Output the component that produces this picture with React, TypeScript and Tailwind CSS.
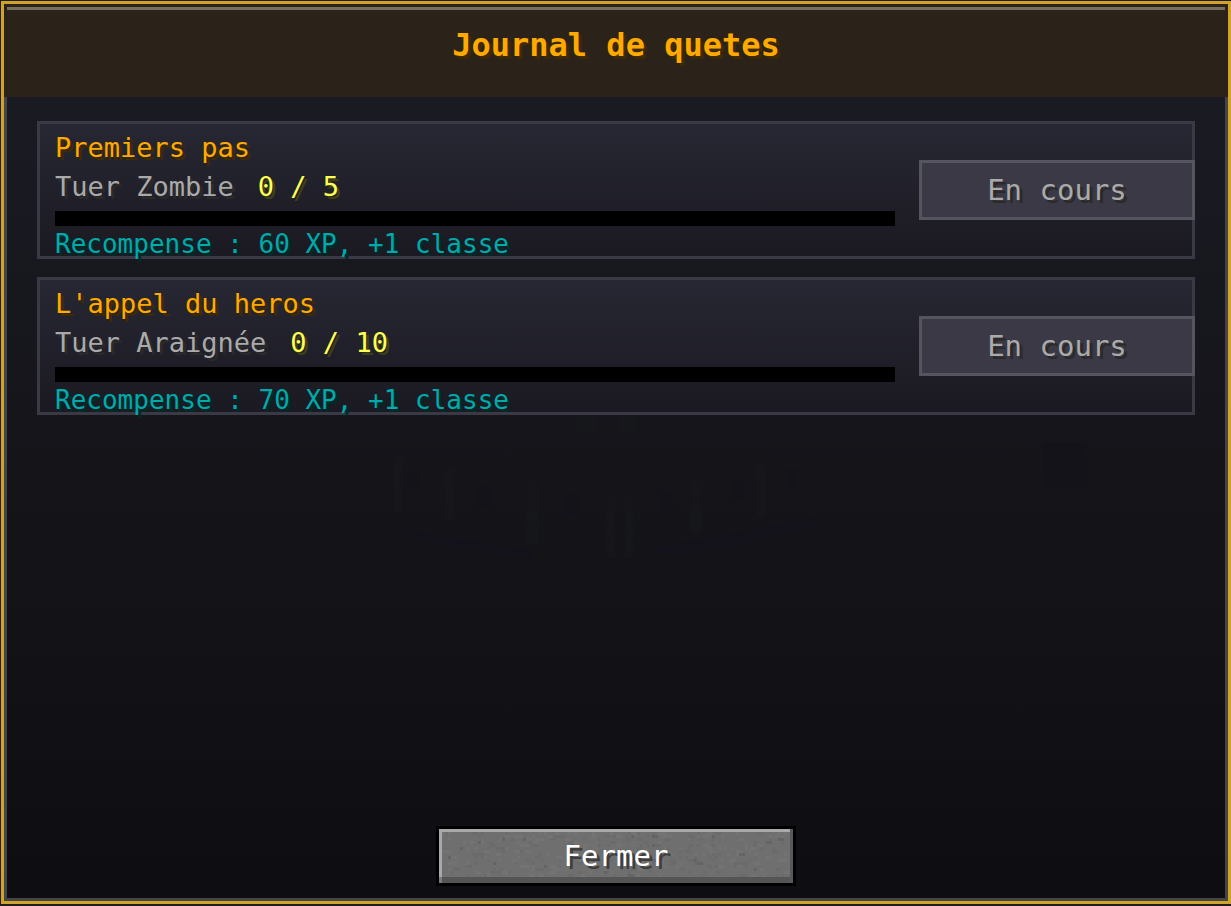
type Quest = {
  title: string;
  task: string;
  current: number;
  goal: number;
  reward: string;
};

const quests: Quest[] = [
  { title: "Premiers pas", task: "Tuer Zombie", current: 0, goal: 5, reward: "60 XP, +1 classe" },
  { title: "L'appel du heros", task: "Tuer Araignée", current: 0, goal: 10, reward: "70 XP, +1 classe" },
];

// Speckles of the stone button, on a 3px grid
const specks = Array.from({ length: 420 }, (_, i) => {
  const seed = Math.abs(Math.sin(i * 12.9898 + 4.1) * 43758.5453);
  const seed2 = Math.abs(Math.sin(i * 78.233 + 1.7) * 24634.6345);
  return {
    x: Math.floor((seed % 1) * 116) * 3,
    y: Math.floor((seed2 % 1) * 17) * 3,
    w: i % 3 === 0 ? 6 : 3,
    fill: i % 17 === 0 ? "#646464" : i % 2 === 0 ? "#6b6b6b" : "#737373",
  };
});

// Dimmed castle wall showing through the panel
const Backdrop = () => (
  <svg
    className="pointer-events-none absolute inset-0 h-full w-full"
    viewBox="0 0 1218 801"
    preserveAspectRatio="none"
    aria-hidden="true"
  >
    <g fill="#191b1d" opacity="0.4">
      <path d="M387 360h8v54h-8zM438 372h8v50h-8zM520 385h12v62h-12zM600 395h8v66h-8zM618 395h8v66h-8zM684 385h10v52h-10zM750 370h8v50h-8z" />
      <path d="M570 320h20v16h-20zM612 320h16v14h-16z" />
    </g>
    <g fill="#14111e" opacity="0.35">
      <path d="M400 375h12v18h-12zM470 388h14v22h-14zM556 397h16v22h-16zM652 394h14v20h-14zM726 382h12v22h-12zM780 372h10v18h-10z" />
      <path d="M385 430l140 24v8l-120-20zM640 452l170-32v10l-140 30z" />
      <path d="M1035 345h45v45h-45z" />
    </g>
  </svg>
);

const QuestCard = ({ quest }: { quest: Quest }) => {
  const { title, task, current, goal, reward } = quest;

  return (
    <li className="flex items-center gap-6 border-3 border-[#3a3946] bg-linear-to-b from-[#272733] to-[#1b1a22] pl-[15px]">
      <div className="-mb-[3px] min-w-0 flex-1 pt-1">
        <h2 className="text-[27px] leading-[39px] text-[#ffaa00] [text-shadow:3px_3px_0_#402a00]">
          {title}
        </h2>
        <p className="flex items-baseline gap-6 leading-[39px]">
          <span className="text-[27px] text-[#aaaaaa] [text-shadow:3px_3px_0_#2a2a2a]">{task}</span>
          <span className="text-[27px] text-[#ffff55] [text-shadow:3px_3px_0_#3f3f15]">
            {current} / {goal}
          </span>
        </p>
        <div
          role="progressbar"
          aria-label={title}
          aria-valuenow={current}
          aria-valuemin={0}
          aria-valuemax={goal}
          className="mt-[5px] h-[15px] bg-black"
        >
          <div className="h-full bg-[#ffaa00]" style={{ width: `${(current / goal) * 100}%` }} />
        </div>
        <p className="mt-[3px] text-[26px] leading-[30px] text-[#00aaaa] [text-shadow:3px_3px_0_#002a2a]">
          Recompense : {reward}
        </p>
      </div>
      <button
        type="button"
        className="-mr-[3px] h-[60px] w-[276px] shrink-0 border-3 border-[#55555f] bg-[#3a3945] text-[29px] leading-[54px] text-[#aaaaaa] [text-shadow:3px_3px_0_#2a2a2a]"
      >
        En cours
      </button>
    </li>
  );
};

const CloseButton = () => (
  <button type="button" className="grid h-[60px] w-[360px] border-3 border-black bg-[#6f6f6f]">
    <svg
      className="col-start-1 row-start-1 h-full w-full"
      viewBox="0 0 354 54"
      preserveAspectRatio="none"
      shapeRendering="crispEdges"
      aria-hidden="true"
    >
      {specks.map((s, i) => (
        <rect key={i} x={s.x} y={s.y} width={s.w} height="3" fill={s.fill} />
      ))}
      <path d="M0 48h354v6H0z" fill="#555555" />
      <path d="M351 0h3v54h-3z" fill="#585858" />
      <path d="M0 0h351v3H3v45H0z" fill="#a9a9a9" />
      <path d="M0 48h3v6H0z" fill="#7c7c7c" />
    </svg>
    <span className="z-10 col-start-1 row-start-1 text-[29px] leading-[54px] text-white [text-shadow:3px_3px_0_#3e3e3e]">
      Fermer
    </span>
  </button>
);

export default function App() {
  return (
    <div className="flex min-h-screen flex-col bg-[#201d1a] pt-px pb-0.5 pl-px font-['DejaVu_Sans_Mono','Liberation_Mono',monospace]">
      <div className="flex flex-1 flex-col border-3 border-[#cfa428]">
        <header className="bg-[#2b231a] px-[3px] pt-[3px] pb-7 text-center">
          <div className="h-[3px] bg-[#78705e]" />
          <h1 className="pt-[11px] text-[32px] leading-[48px] font-bold text-[#ffaa00] [text-shadow:3px_3px_0_#402a00]">
            Journal de quetes
          </h1>
        </header>
        <main className="relative flex flex-1 flex-col border-x-3 border-b-3 border-[#454449] bg-linear-to-b from-[#1a1a23] via-[#141419] to-[#0e0d12] px-[30px] pt-6 pb-3">
          <Backdrop />
          <ul className="relative flex flex-col gap-[18px]">
            {quests.map((quest) => (
              <QuestCard key={quest.title} quest={quest} />
            ))}
          </ul>
          <div className="relative mt-auto flex justify-center pt-6">
            <CloseButton />
          </div>
        </main>
      </div>
    </div>
  );
}
